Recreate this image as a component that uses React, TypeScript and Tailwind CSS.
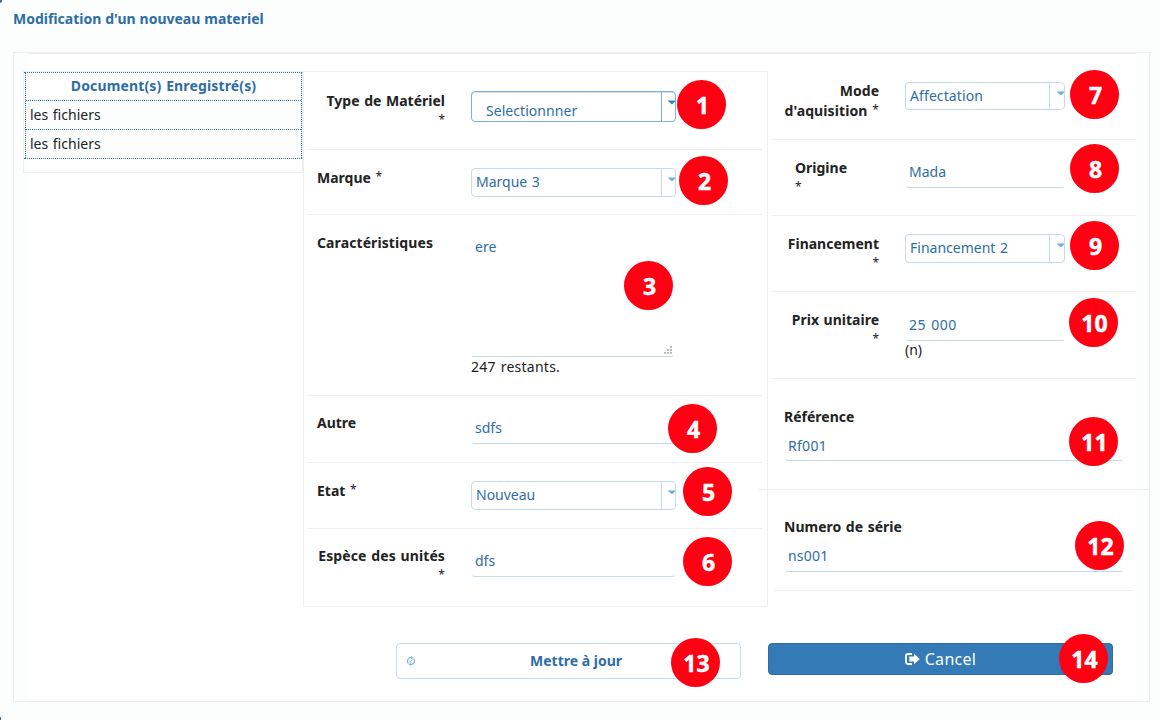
import type { ReactNode } from 'react';

const Star = () => <span className="relative -top-[2px] text-[12px] leading-none font-normal text-[#222]">*</span>;

function Select({ value, className, text = 'pt-[3px] pl-[4px]', active = false }: { value: ReactNode; className: string; text?: string; active?: boolean }) {
  return (
    <div className={`flex rounded-[4px] border bg-white text-[#2e6da4] ${active ? 'border-[#79b0df] shadow-[inset_0_1px_1px_#ddd]' : 'border-[#c5dbec]'} ${className}`}>
      <div className={`flex-1 whitespace-nowrap ${text}`}>{value}</div>
      <div className={`flex shrink-0 justify-end border-l pt-[8px] ${active ? 'border-[#79b0df]' : 'border-[#c5dbec]'} ${className.includes('w-[160px]') ? 'w-[15px]' : 'w-[14px]'}`}>
        <svg width="7" height="5" viewBox="0 0 7 5" className={active ? 'text-[#2e83cf]' : 'text-[#6eb0de]'}>
          <path d="M0 .5h7v1L4.5 4h-1L.5 1.5z" fill="currentColor" />
        </svg>
      </div>
    </div>
  );
}

function Field({ value, className }: { value: ReactNode; className: string }) {
  return (
    <div className={`rounded-[4px] border border-transparent border-b-[#c5dbec] pl-[3px] whitespace-nowrap text-[#2e6da4] ${className}`}>{value}</div>
  );
}

const badges: [string, string][] = [
  ['1', 'left-[677px] top-[80px]'],
  ['2', 'left-[679px] top-[156px]'],
  ['3', 'left-[624px] top-[261px]'],
  ['4', 'left-[668px] top-[404px]'],
  ['5', 'left-[683px] top-[467px]'],
  ['6', 'left-[683px] top-[537px]'],
  ['7', 'left-[1070px] top-[70px]'],
  ['8', 'left-[1070px] top-[144px]'],
  ['9', 'left-[1070px] top-[221px]'],
  ['10', 'left-[1069px] top-[298px]'],
  ['11', 'left-[1069px] top-[417px]'],
  ['12', 'left-[1075px] top-[521px]'],
  ['13', 'left-[671px] top-[638px]'],
  ['14', 'left-[1059px] top-[634px]'],
];

const midRow = 'ml-[4px] flex w-[454px] gap-[26px]';
const midLabel = 'w-[137px] shrink-0 pl-[9px] font-bold whitespace-nowrap text-[#222]';
const sideRow = 'ml-[4px] flex w-[364px] gap-[26px] border-b border-[#eee]';
const sideLabel = 'w-[107px] shrink-0 font-bold whitespace-nowrap text-[#222]';

export default function App() {
  return (
    <div className="relative h-[720px] w-[1160px] overflow-hidden bg-[#fcfefe] font-['Noto_Sans',sans-serif] text-[14px] leading-[20px] text-[#222] [word-spacing:1px]">
      <h1 className="h-[52px] pt-[9px] pl-[13px] font-bold text-[#2e6da4] [word-spacing:0.3px]">Modification d'un nouveau materiel</h1>
      <main className="ml-[13px] h-[650px] w-[1137px] border border-[#ebeeee] bg-[linear-gradient(to_right,#fcfefe_14px,#fff_14px,#fff_1122px,#fcfefe_1122px)]">
        <div className="ml-[14px] h-px w-[1108px] bg-[#eee]" />
        <div className="flex items-start pt-[17px] pl-[9px]">
          <section className="h-[102px] w-[280px] border border-[#eee]">
            <div className="border-y border-dotted border-[#2e6da4]">
              <div className="ml-px border-x border-dotted border-[#2e6da4]">
                <div className="h-[28px] border-b border-dotted border-[#2e6da4] pt-[3px] text-center font-bold tracking-[0.14px] text-[#2e6da4]">Document(s) Enregistré(s)</div>
                <div className="h-[29px] border-b border-dotted border-[#2e6da4] bg-[#fcfefe] pt-[4px] pl-[4px]">les fichiers</div>
                <div className="h-[28px] bg-[#fcfefe] pt-[4px] pl-[4px]">les fichiers</div>
              </div>
            </div>
          </section>

          <section className="h-[536px] w-[465px] border border-[#eee]">
            <div className={`${midRow} h-[78px] border-b border-[#eee]`}>
              <div className={`${midLabel} pt-[19px] text-right`}>Type de Matériel<br /><Star /></div>
              <Select active value="Selectionnner" text="pt-[9px] pl-[14px] tracking-[0.05px]" className="mt-[19px] h-[31px] w-[205px]" />
            </div>
            <div className={`${midRow} h-[65px] border-b border-[#eee]`}>
              <div className={`${midLabel} pt-[18px]`}>Marque <Star /></div>
              <Select value="Marque 3" className="mt-[18px] h-[29px] w-[205px]" />
            </div>
            <div className={`${midRow} h-[181px] border-b border-[#eee]`}>
              <div className={`${midLabel} pt-[18px] tracking-[0.1px]`}>Caractéristiques</div>
              <div>
                <Field
                  className="mt-[18px] flex h-[124px] w-[204px] justify-between pt-[3px]"
                  value={
                    <>
                      <span>ere</span>
                      <svg width="9" height="9" viewBox="0 0 9 9" className="mr-px mb-px self-end" fill="#bbb">
                        <path d="M6 0h2v2H6zM3 3h2v2H3zM6 3h2v2H6zM0 6h2v2H0zM3 6h2v2H3zM6 6h2v2H6z" />
                      </svg>
                    </>
                  }
                />
                <div className="tracking-[0.25px]">247 restants.</div>
              </div>
            </div>
            <div className={`${midRow} h-[67px] border-b border-[#eee]`}>
              <div className={`${midLabel} pt-[17px]`}>Autre</div>
              <Field value="sdfs" className="mt-[17px] h-[31px] w-[205px] pt-[4px]" />
            </div>
            <div className={`${midRow} h-[66px] border-b border-[#eee]`}>
              <div className={`${midLabel} pt-[18px]`}>Etat <Star /></div>
              <Select value="Nouveau" className="mt-[18px] h-[29px] w-[205px]" />
            </div>
            <div className={midRow}>
              <div className={`${midLabel} pt-[17px] text-right tracking-[0.1px]`}>Espèce des unités<br /><Star /></div>
              <Field value="dfs" className="mt-[17px] h-[31px] w-[205px] pt-[4px]" />
            </div>
          </section>

          <section className="h-[536px] w-[381px]">
            <div className={`${sideRow} h-[69px]`}>
              <div className={`${sideLabel} pt-[10px] text-right`}>Mode<br /><span className="tracking-[0.1px]">d'aquisition <Star /></span></div>
              <Select value="Affectation" className="mt-[11px] h-[28px] w-[160px] tracking-[0.1px]" />
            </div>
            <div className={`${sideRow} h-[76px]`}>
              <div className={`${sideLabel} pt-[18px] pl-[23px]`}>Origine<br /><Star /></div>
              <Field value="Mada" className="mt-[17px] h-[31px] w-[160px] pt-[4px]" />
            </div>
            <div className={`${sideRow} h-[76px]`}>
              <div className={`${sideLabel} pt-[18px] text-right`}>Financement<br /><Star /></div>
              <Select value="Financement 2" className="mt-[18px] h-[29px] w-[160px]" />
            </div>
            <div className={`${sideRow} h-[87px]`}>
              <div className={`${sideLabel} pt-[18px] text-right`}>Prix unitaire<br /><Star /></div>
              <div>
                <Field value="25 000" className="mt-[18px] h-[31px] w-[160px] pt-[4px] tracking-[0.5px]" />
                <div className="-mt-px">(n)</div>
              </div>
            </div>
            <div className="-ml-[9px] h-[111px] w-[390px] border-b border-[#ebeeee] pt-[28px] pl-[25px]">
              <div className="font-bold">Référence</div>
              <Field value="Rf001" className="mt-[3px] h-[31px] w-[340px] pt-[5px] tracking-[0.3px]" />
            </div>
            <div className="ml-[7px] h-[101px] w-[357px] border-b border-[#ebeeee] pt-[27px] pl-[9px]">
              <div className="font-bold">Numero de série</div>
              <Field value="ns001" className="mt-[4px] h-[31px] w-[340px] pt-[4px] tracking-[0.2px]" />
            </div>
          </section>
        </div>

        <div className="mt-[36px] ml-[382px] flex items-start gap-[27px]">
          <button className="flex h-[36px] w-[345px] items-center rounded-[4px] border border-[#c5dbec] bg-white pl-[9px] font-bold text-[#2e6da4]">
            <svg width="10" height="10" viewBox="0 0 10 10" fill="none" stroke="#79b7e7" strokeWidth="1.2">
              <path d="M5.5 1.5H3.8L1.5 3.7v2.6l1 1.2M4.5 8.5h1.7l2.3-2.2V3.7l-1-1.2" />
              <path d="M5 0v3.4l2.4-1.7zM5 6.6V10L2.6 8.3z" fill="#79b7e7" stroke="none" />
              <path d="M3.5 6.3l3-2.6" strokeWidth=".9" />
            </svg>
            <span className="-ml-[4px] flex-1 text-center [word-spacing:0px]">Mettre à jour</span>
          </button>
          <button className="flex h-[32px] w-[345px] items-center justify-center gap-[5px] rounded-[4px] border border-[#2e6da4] bg-[#337ab7] text-[16px] tracking-[0.3px] text-white">
            <svg width="15" height="12" viewBox="0 0 15 12">
              <path d="M7 1H3.2Q1 1 1 3.2v5.6Q1 11 3.2 11H7" fill="none" stroke="currentColor" strokeWidth="1.8" />
              <path d="M4.3 3.6H9V.8L14.8 6 9 11.2V8.4H4.3z" fill="currentColor" />
            </svg>
            Cancel
          </button>
        </div>
      </main>
      {badges.map(([n, place]) => (
        <div key={n} className={`absolute flex size-[49px] items-center justify-center rounded-full bg-[#ff0012] pl-[2px] font-['Noto_Sans',sans-serif] text-[23px] font-bold text-white [-webkit-text-stroke:0.5px_white] ${place}`}>
          {n}
        </div>
      ))}
      <div className="absolute top-0 left-0 h-[3px] w-[2px] rounded-br-full bg-[#3f6b91]" />
      <div className="absolute bottom-0 left-0 h-[3px] w-px bg-[#3f6b91]" />
    </div>
  );
}
